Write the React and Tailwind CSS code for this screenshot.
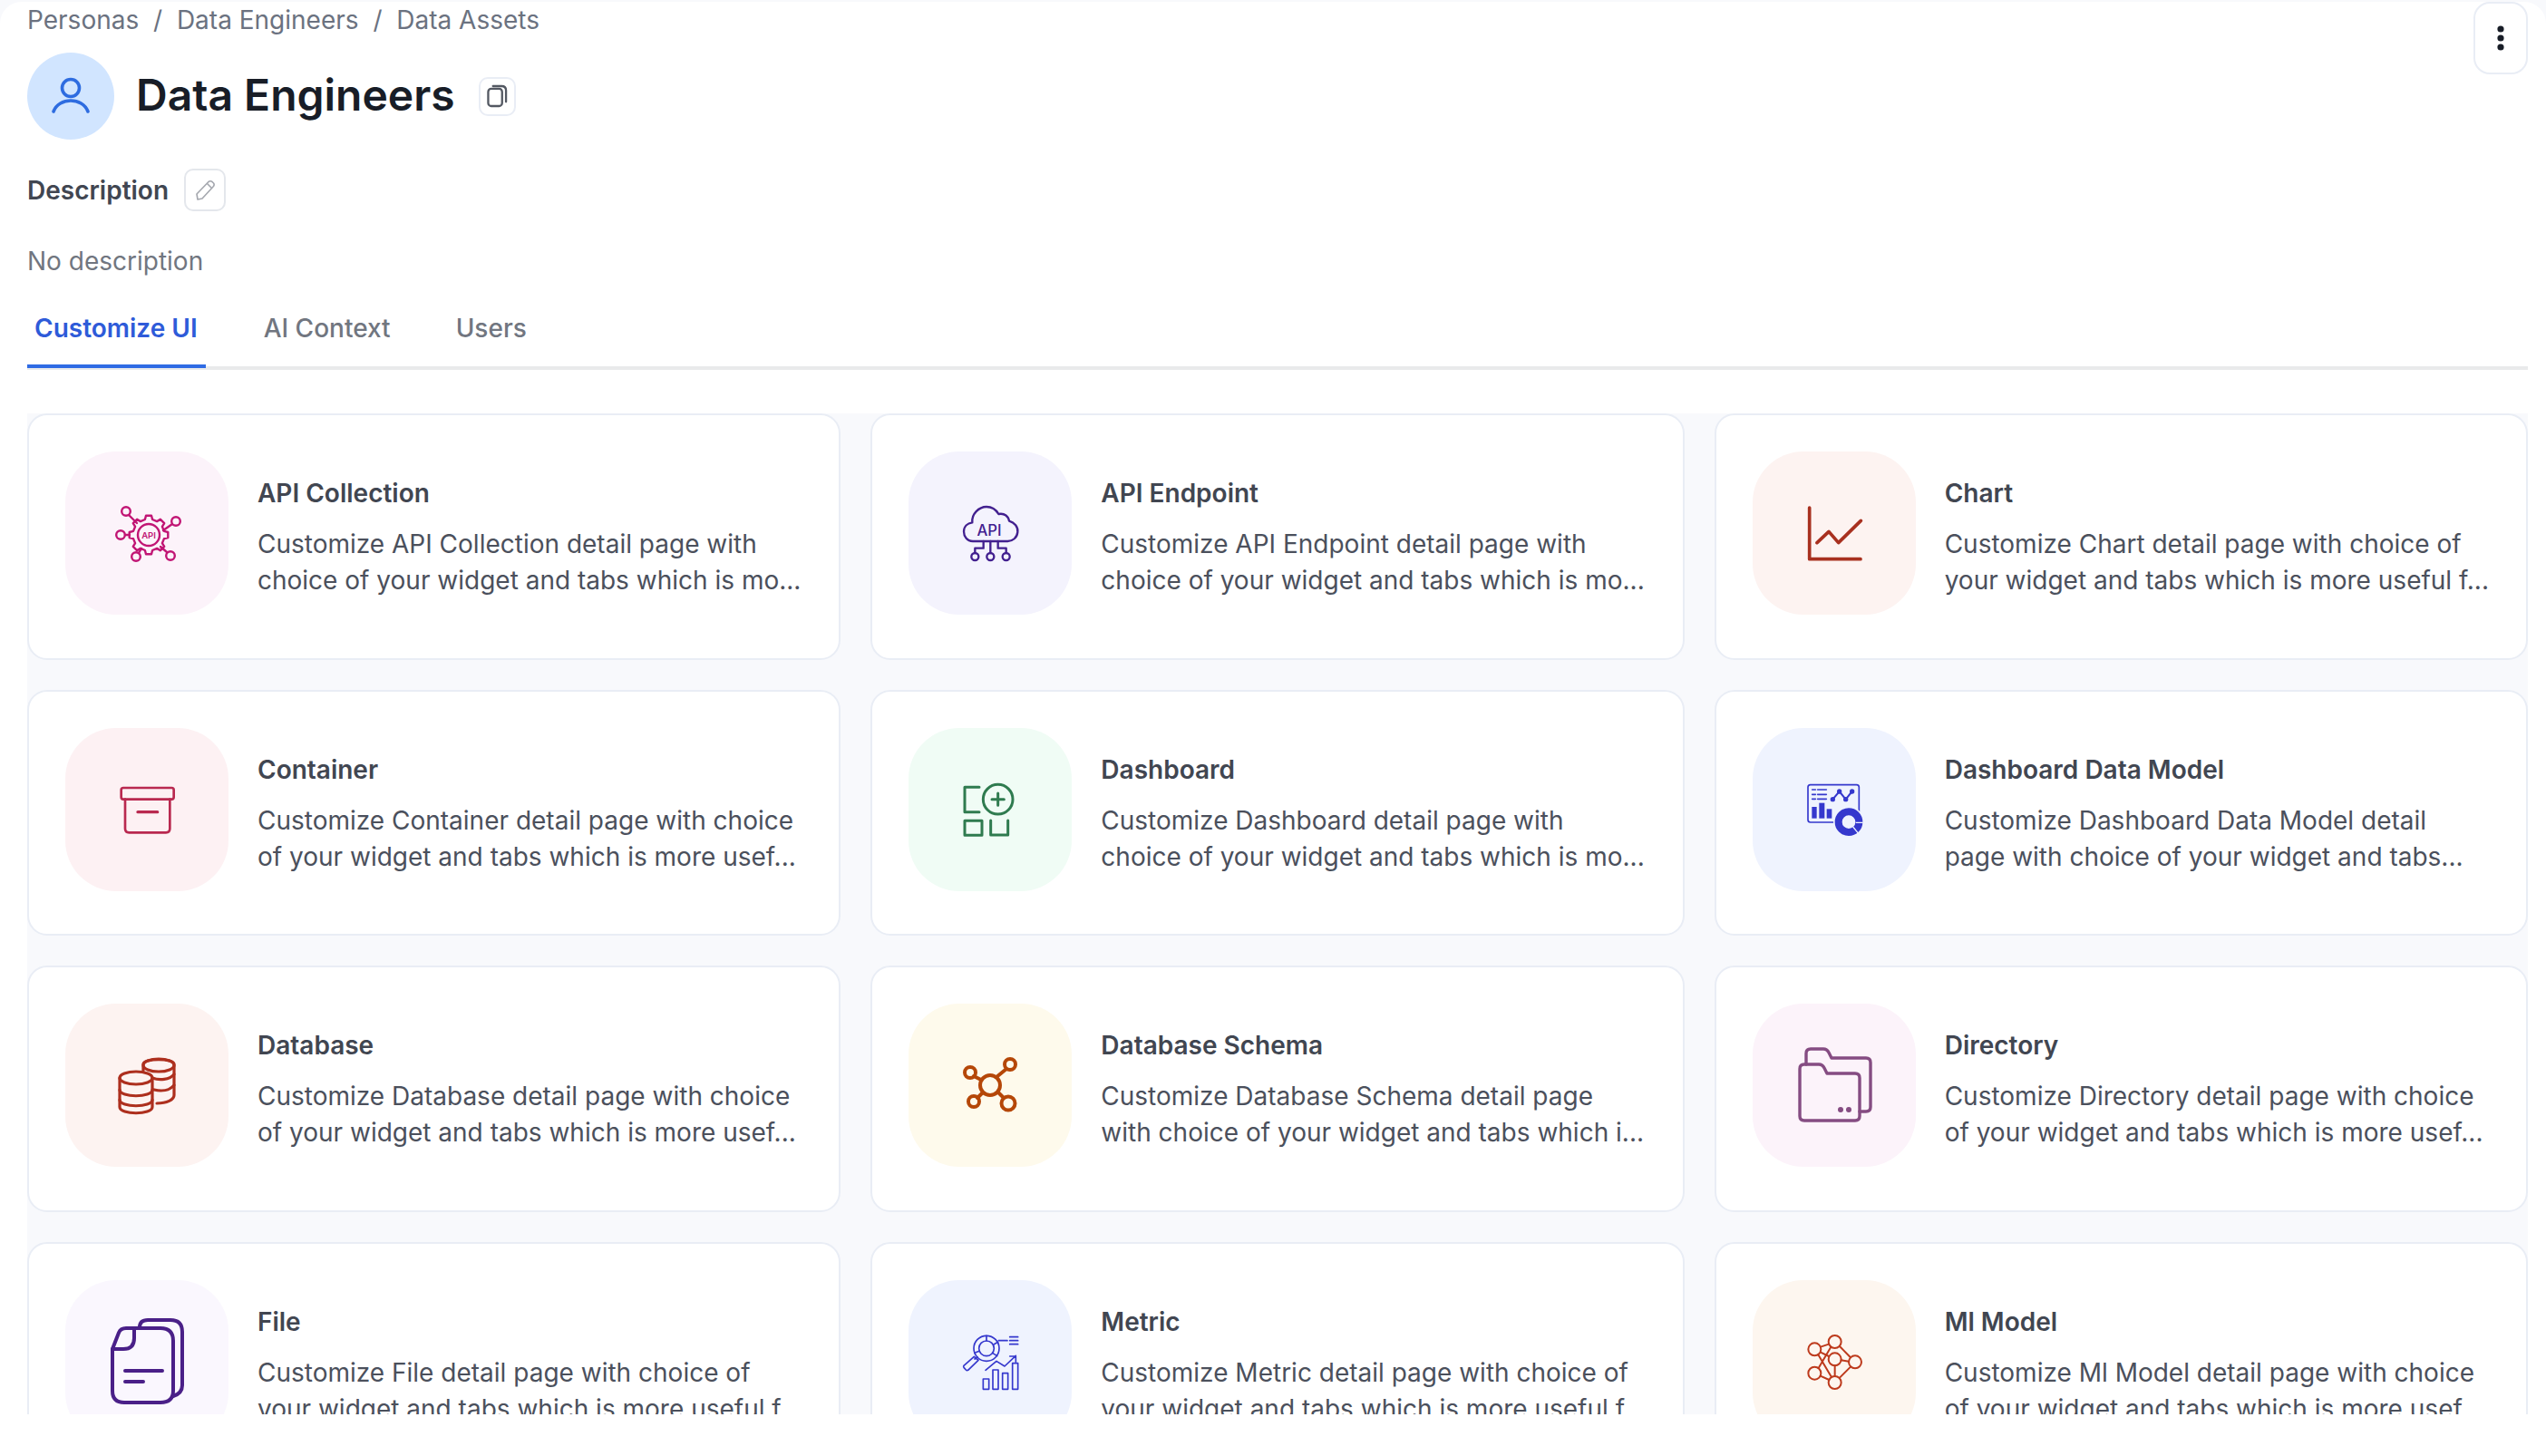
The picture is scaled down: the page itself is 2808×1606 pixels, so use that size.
import React from "react";

const S = ({ color, children, w = 6, t }) => (
  <svg viewBox="0 0 540 540" className="h-full w-full" fill="none" stroke={color} strokeWidth={w} strokeLinecap="round" strokeLinejoin="round">
    <g transform={t}>{children}</g>
  </svg>
);
const R = ({ color, children, w = 3 }) => (
  <svg viewBox="0 0 180 180" className="h-full w-full" fill="none" stroke={color} strokeWidth={w} strokeLinecap="round" strokeLinejoin="round">
    {children}
  </svg>
);

function gearPath(cx, cy, ro, ri, n) {
  const pts = [];
  const step = (Math.PI * 2) / n;
  for (let i = 0; i < n; i++) {
    const a = i * step - Math.PI / 2;
    const d = step * 0.18;
    const d2 = step * 0.3;
    [[ri, a - d2], [ro, a - d], [ro, a + d], [ri, a + d2]].forEach(([r, t]) => {
      pts.push(`${(cx + r * Math.cos(t)).toFixed(1)} ${(cy + r * Math.sin(t)).toFixed(1)}`);
    });
  }
  return "M" + pts.join(" L") + " Z";
}

const ApiCollection = () => {
  const c = "#c11574";
  return (
    <R color={c} w={2.4}>
      <path d={gearPath(92, 92, 21.5, 17.5, 8)} />
      <circle cx="92" cy="92" r="12" />
      <text x="92" y="95.5" textAnchor="middle" fontSize="9.5" fontWeight="600" fill={c} stroke="none" fontFamily="Inter, sans-serif">API</text>
      <circle cx="67" cy="66" r="4.8" />
      <circle cx="122" cy="77" r="4.8" />
      <circle cx="61" cy="92" r="4.8" />
      <circle cx="78" cy="116" r="4.8" />
      <circle cx="116" cy="115" r="4.8" />
      <path d="M70 70 L79 79 M118 80 L108 87 M66 92 H71 M81 112 L84 107 M112 111 L105 105" />
    </R>
  );
};
const ApiEndpoint = () => (
  <S color="#42208f" w={7} t="translate(-127,-55)">
    <path d="M340 352 C320 352 310 335 310 320 C310 303 322 292 338 290 C335 262 360 238 385 238 C405 238 418 250 425 262 C445 258 458 270 460 285 C478 290 490 305 488 322 C486 340 472 352 455 352 Z" />
    <path d="M398 352 V391 M375 352 V375 H347 V391 M423 352 V375 H450 V391" />
    <circle cx="347" cy="403" r="12" />
    <circle cx="398" cy="403" r="12" />
    <circle cx="450" cy="403" r="12" />
    <text x="394" y="333" textAnchor="middle" fontSize="50" fontWeight="500" fill="#42208f" stroke="none" fontFamily="Inter, sans-serif">API</text>
  </S>
);
const ChartIcon = () => (
  <S color="#a8301f" w={11} t="translate(-97,-55)">
    <path d="M285 241 V411 H454" />
    <path d="M310 357 L349 320 L381 357 L455 284" />
  </S>
);
const ContainerIcon = () => (
  <S color="#b9294f" w={8} t="translate(-37,-37)">
    <rect x="222" y="235" width="174" height="38" rx="7" />
    <path d="M235 273 V370 Q235 383 248 383 H370 Q383 383 383 370 V273" />
    <path d="M277 315 H342" strokeWidth="10" />
  </S>
);
const DashboardIcon = () => (
  <S color="#2f7b4f" w={9} t="translate(-42,-38)">
    <path d="M276 234 H228 V316 H276" />
    <circle cx="338" cy="274" r="49" />
    <path d="M338 254 V294 M318 274 H358" />
    <rect x="228" y="345" width="57" height="48" />
    <path d="M314 344 V392 H371 V344" />
  </S>
);
const DashboardModelIcon = () => {
  const c = "#3538cd";
  const bg = "#eff3fe";
  return (
    <S color={c} w={5} t="translate(-37,-37)">
      <rect x="220" y="225" width="169" height="124" rx="8" />
      <path d="M234 241 H245 M252 241 H281 M234 257 H245 M252 257 H281 M234 272 H245 M252 272 H281" />
      <path d="M302 273 L324 247 L345 273 L366 247" strokeWidth="6" />
      <g fill={c} stroke="none">
        <circle cx="302" cy="273" r="8" />
        <circle cx="324" cy="247" r="8" />
        <circle cx="345" cy="273" r="8" />
        <circle cx="366" cy="247" r="8" />
        <rect x="233" y="298" width="16" height="38" />
        <rect x="257" y="285" width="18" height="51" />
        <rect x="282" y="305" width="17" height="31" />
      </g>
      <circle cx="355" cy="348" r="51" fill={bg} stroke="none" />
      <circle cx="355" cy="348" r="34" strokeWidth="24" />
      <path d="M378 350 H402 M369 364 L387 386" stroke={bg} strokeWidth="4" strokeLinecap="butt" />
    </S>
  );
};
const DatabaseIcon = () => {
  const cyl = (cx, top, bot, bands) => (
    <g>
      <ellipse cx={cx} cy={top} rx="18" ry="7" />
      <path d={`M${cx - 18} ${top} V${bot} C${cx - 18} ${bot + 9} ${cx + 18} ${bot + 9} ${cx + 18} ${bot} V${top}`} />
      {bands.map((b) => (
        <path key={b} d={`M${cx - 18} ${b} C${cx - 18} ${b + 9} ${cx + 18} ${b + 9} ${cx + 18} ${b}`} />
      ))}
    </g>
  );
  return (
    <R color="#ad2f1e" w={3.2}>
      <path d="M86 74 V67 C86 60 120 60 120 67 V101 C120 106 112 110 101 110" />
      <ellipse cx="103" cy="68" rx="17" ry="7" />
      <path d="M96 82 C104 85 115 84 120 78 M98 95 C106 97 115 96 120 90" />
      {cyl(78, 82, 114, [95, 106])}
    </R>
  );
};
const SchemaIcon = () => (
  <R color="#b54708" w={4}>
    <path d="M97 81 L108 72 M80 84 L72 80 M82 98 L76 104 M99 98 L105 104" />
    <circle cx="90" cy="90" r="11" />
    <circle cx="112" cy="67" r="6" />
    <circle cx="68" cy="76" r="6" />
    <circle cx="72" cy="108" r="6" />
    <circle cx="110" cy="110" r="7.5" />
  </R>
);
const DirectoryIcon = () => (
  <R color="#854c82" w={3.4}>
    <path d="M59 67 V55 Q59 50 64 50 H78 Q82 50 84 54 L87 60 H125 Q130 60 130 65 V114 Q130 119 125 119 H118" />
    <path d="M52 72 Q52 67 57 67 H73 Q77 67 79 71 L82 77 H113 Q118 77 118 82 V124 Q118 129 113 129 H57 Q52 129 52 124 Z" />
    <circle cx="97" cy="117" r="3" fill="#854c82" stroke="none" />
    <circle cx="106" cy="117" r="3" fill="#854c82" stroke="none" />
  </R>
);
const FileIcon = () => (
  <R color="#4a2088" w={4}>
    <path d="M82 52 Q82 44 91 44 H116 Q129 44 129 57 V116 Q129 125 119 128" />
    <path d="M76 53 H105 Q119 53 119 67 V122 Q119 135 105 135 H65 Q52 135 52 122 V76 L59 58 Q61 53 67 53 Z" />
    <path d="M76 53 V64 Q76 76 64 76 H52" />
    <path d="M66 100 H107 M66 112 H86" />
  </R>
);
const MetricIcon = () => (
  <S color="#3538cd" w={5} t="translate(-7,-97)">
    <circle cx="265" cy="323" r="42" />
    <circle cx="265" cy="323" r="25" />
    <path d="M265 281 V298 M289 310 L303 302 M285 338 L300 348 M241 332 L226 338" />
    <path d="M235 351 L226 358 M190 380 L224 350 L238 362 L204 395 Q200 397 197 394 L190 386 Q188 383 190 380 Z" />
    <path d="M305 297 H334 M342 285 H369 M342 297 H369 M342 309 H369" />
    <path d="M262 395 L298 365 L325 382 L362 347 M342 349 H362 V368" />
    <rect x="254" y="424" width="19" height="34" />
    <rect x="286" y="394" width="18" height="64" />
    <rect x="318" y="405" width="18" height="53" />
    <rect x="351" y="372" width="18" height="86" />
  </S>
);
const MlIcon = () => (
  <S color="#bd3a1c" w={6} t="translate(-37,-97)">
    <path d="M262 318 L289 309 M325 316 L360 352 M330 362 L355 366 M309 380 V415 M361 384 L325 420 M254 344 L298 418 M262 336 L289 349 M296 318 L255 388 M261 414 L290 427" />
    <circle cx="242" cy="326" r="21" />
    <circle cx="309" cy="301" r="21" />
    <circle cx="309" cy="359" r="21" />
    <circle cx="376" cy="368" r="21" />
    <circle cx="242" cy="405" r="21" />
    <circle cx="309" cy="436" r="21" />
  </S>
);

const MO = "choice of your widget and tabs which is mo...";
const USEF = "of your widget and tabs which is more usef...";
const USEFUL = "your widget and tabs which is more useful f...";

const cards = [
  { name: "API Collection", bg: "bg-[#fcf3fa]", Icon: ApiCollection, a: "Customize API Collection detail page with", b: MO },
  { name: "API Endpoint", bg: "bg-[#f4f3fd]", Icon: ApiEndpoint, a: "Customize API Endpoint detail page with", b: MO },
  { name: "Chart", bg: "bg-[#fdf3f1]", Icon: ChartIcon, a: "Customize Chart detail page with choice of", b: USEFUL },
  { name: "Container", bg: "bg-[#fdf1f3]", Icon: ContainerIcon, a: "Customize Container detail page with choice", b: USEF },
  { name: "Dashboard", bg: "bg-[#f0fcf5]", Icon: DashboardIcon, a: "Customize Dashboard detail page with", b: MO },
  { name: "Dashboard Data Model", bg: "bg-[#eff3fe]", Icon: DashboardModelIcon, a: "Customize Dashboard Data Model detail", b: "page with choice of your widget and tabs..." },
  { name: "Database", bg: "bg-[#fdf3f1]", Icon: DatabaseIcon, a: "Customize Database detail page with choice", b: USEF },
  { name: "Database Schema", bg: "bg-[#fefaec]", Icon: SchemaIcon, a: "Customize Database Schema detail page", b: "with choice of your widget and tabs which i..." },
  { name: "Directory", bg: "bg-[#fcf3fa]", Icon: DirectoryIcon, a: "Customize Directory detail page with choice", b: USEF },
  { name: "File", bg: "bg-[#faf7fe]", Icon: FileIcon, a: "Customize File detail page with choice of", b: USEFUL },
  { name: "Metric", bg: "bg-[#eff3fe]", Icon: MetricIcon, a: "Customize Metric detail page with choice of", b: USEFUL },
  { name: "Ml Model", bg: "bg-[#fdf6ef]", Icon: MlIcon, a: "Customize Ml Model detail page with choice", b: USEF },
];

function Card({ name, bg, Icon, a, b }) {
  return (
    <div className="flex h-[271.7px] items-center gap-[32px] rounded-[22px] border-2 border-[#e9edf5] bg-white pl-[40px] pr-[40px]">
      <div className={`mb-[8px] h-[180px] w-[180px] shrink-0 rounded-[56px] ${bg}`}>
        <Icon />
      </div>
      <div className="min-w-0 flex-1">
        <div className="text-[28px] font-semibold leading-[40px] text-[#414651]">{name}</div>
        <p className="mt-[16px] whitespace-nowrap text-[28px] leading-[40px] text-[#4b505c]">
          {a}
          <br />
          {b}
        </p>
      </div>
    </div>
  );
}

export default function App() {
  return (
    <div className="h-[1606px] w-[2808px] overflow-hidden bg-[#f8f9fc] pt-[2px] font-['Inter',sans-serif]">
      <div className="h-[1604px] rounded-t-[24px] bg-white">
        <div className="flex justify-between pl-[30px] pr-[20px]">
          <div>
            <div className="flex h-[40px] items-center gap-[15.8px] text-[28px] text-[#6b7280]">
              <span>Personas</span>
              <span>/</span>
              <span>Data Engineers</span>
              <span>/</span>
              <span>Data Assets</span>
            </div>
            <div className="mt-[16px] flex h-[96px] items-center">
              <div className="flex h-[96px] w-[96px] items-center justify-center rounded-full bg-[#d1e5ff]">
                <svg viewBox="0 0 96 96" className="h-[96px] w-[96px]" fill="none" stroke="#2e6ce0" strokeWidth="3.6" strokeLinecap="round">
                  <circle cx="48" cy="39" r="9.5" />
                  <path d="M29 65 C35 49 61 49 67 65" />
                </svg>
              </div>
              <h1 className="ml-[24px] pb-[2px] text-[48px] font-semibold leading-[60px] text-[#181d27]">Data Engineers</h1>
              <div className="ml-[26px] flex h-[43px] w-[41px] items-center justify-center rounded-[10px] border-2 border-[#e9edf5]">
                <svg viewBox="0 0 24 27" className="h-[26px] w-[23px]" fill="none" stroke="#535862" strokeWidth="2.4" strokeLinecap="round" strokeLinejoin="round">
                  <rect x="1.5" y="5" width="16" height="20" rx="3.5" />
                  <path d="M7 2 H17 Q22 2 22 7 V20" />
                </svg>
              </div>
            </div>
          </div>
          <div className="flex h-[80px] w-[60px] items-center justify-center rounded-[18px] border-2 border-[#e9edf5] bg-white">
            <svg viewBox="0 0 8 28" className="h-[28px] w-[8px]" fill="#181d27">
              <circle cx="4" cy="4" r="3.6" />
              <circle cx="4" cy="14" r="3.6" />
              <circle cx="4" cy="24" r="3.6" />
            </svg>
          </div>
        </div>

        <div className="mt-[32px] flex h-[47px] items-center pl-[30px]">
          <span className="text-[28px] font-semibold text-[#414651]">Description</span>
          <div className="ml-[17px] flex h-[47px] w-[46px] items-center justify-center rounded-[10px] border-2 border-[#e4e7ec]">
            <svg viewBox="0 0 24 24" className="h-[24px] w-[24px]" fill="none" stroke="#a4a7ae" strokeWidth="1.6" strokeLinejoin="round">
              <path d="M4 22 L3 16 L16 2.5 Q18 1 20 2.5 L21.5 4 Q23 6 21 8 L9 21 Z" />
              <path d="M14.5 4.5 L19.5 9.5" />
            </svg>
          </div>
        </div>

        <div className="mt-[35px] pl-[30px] text-[28px] leading-[40px] text-[#717680]">No description</div>

        <div className="ml-[30px] mr-[20px] mt-[14px] flex h-[86px] items-start gap-[56px] border-b-4 border-[#e9eaeb]">
          <div className="flex h-[84px] items-center border-b-4 border-[#2f6be4] pl-[8px] pr-[9px] text-[28px] font-semibold text-[#2e5bd9]">Customize UI</div>
          <div className="flex h-[80px] items-center pl-[8px] pr-[8px] text-[28px] font-medium text-[#717680]">AI Context</div>
          <div className="flex h-[80px] items-center pl-[8px] pr-[9px] text-[28px] font-medium text-[#717680]">Users</div>
        </div>

        <div className="ml-[30px] mr-[20px] mt-[48px] h-[1104px] overflow-hidden bg-[#f8f9fc]">
          <div className="grid grid-cols-3 gap-x-[33px] gap-y-[33px]">
            {cards.map((c) => (
              <Card key={c.name} {...c} />
            ))}
          </div>
        </div>
      </div>
    </div>
  );
}
